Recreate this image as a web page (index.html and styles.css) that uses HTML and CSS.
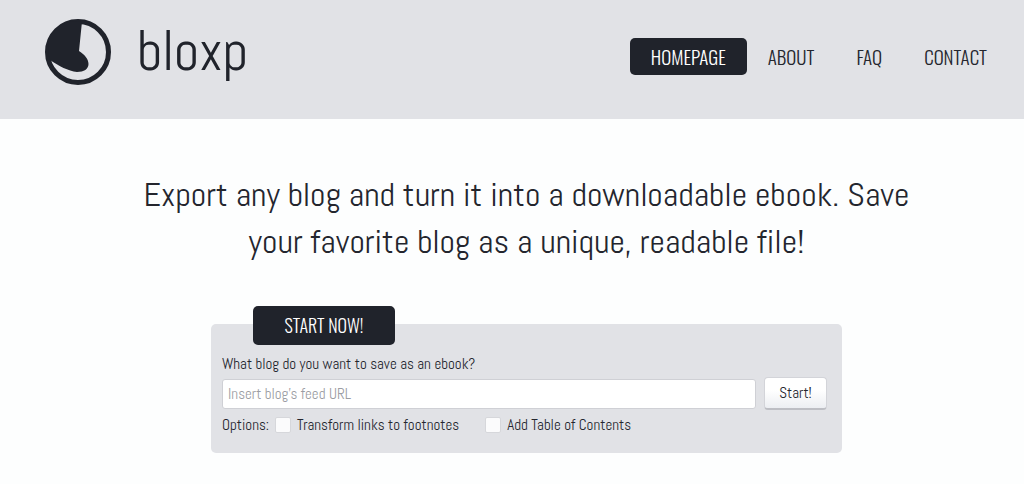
FILE: index.html
```html
<!DOCTYPE html>
<html lang="en">
<head>
<meta charset="utf-8">
<meta name="viewport" content="width=device-width, initial-scale=1">
<title>bloxp</title>
<link rel="stylesheet" href="styles.css">
</head>
<body>
<header class="site-header">
  <a class="brand" href="#">
    <svg class="brand-mark" viewBox="0 0 66 66" aria-hidden="true">
      <circle cx="33" cy="33" r="30.5" fill="none" stroke="#20232b" stroke-width="5"/>
      <path fill="#20232b" d="M37 2.5 L34 32 C40 36 43.500 40 43.500 45 C43.500 50 39 53 32 53 C23 52 14 47 5 41 C-2 20 10 0 37 2.5Z"/>
    </svg>
    <span class="brand-name">bloxp</span>
  </a>
  <nav class="site-nav">
    <a class="nav-link nav-link-active" href="#">HOMEPAGE</a>
    <a class="nav-link" href="#">ABOUT</a>
    <a class="nav-link" href="#">FAQ</a>
    <a class="nav-link" href="#">CONTACT</a>
  </nav>
</header>
<main class="content">
  <h1 class="headline">Export any blog and turn it into a downloadable ebook. Save your favorite blog as a unique, readable file!</h1>
  <form class="export-form">
    <h2 class="form-title">START NOW!</h2>
    <label class="feed-label" for="feed">What blog do you want to save as an ebook?</label>
    <div class="feed-row">
      <input class="feed-input" id="feed" type="text" placeholder="Insert blog’s feed URL">
      <button class="start-button" type="submit">Start!</button>
    </div>
    <div class="options">
      <span>Options:</span>
      <label class="option"><input class="check" type="checkbox"> Transform links to footnotes</label>
      <label class="option"><input class="check" type="checkbox"> Add Table of Contents</label>
    </div>
  </form>
</main>
</body>
</html>
```
FILE: styles.css
```css
* { box-sizing: border-box; }
body {
  margin: 0;
  background: #fdfefe;
  color: #24262e;
  font-family: Abel, "Roboto Condensed", "Liberation Sans Narrow", "Liberation Sans", sans-serif;
  font-size: 15px;
  line-height: 20px;
}
.site-header {
  display: flex;
  justify-content: space-between;
  align-items: flex-start;
  padding: 19px 16px 16px 45px;
  min-height: 119px;
  background: #e1e2e6;
}
.brand {
  display: flex;
  align-items: flex-start;
  gap: 26px;
  color: #20232b;
  text-decoration: none;
}
.brand-mark { width: 66px; height: 66px; }
.brand-name { font-size: 56px; line-height: 64px; }
.site-nav { display: flex; padding-top: 19px; }
.nav-link {
  padding: 0 21px;
  border-radius: 5px;
  color: #24262e;
  font-family: Oswald, Abel, "Roboto Condensed", "Liberation Sans Narrow", sans-serif;
  font-size: 19px;
  font-weight: 300;
  line-height: 37px;
  text-decoration: none;
}
.nav-link-active { background: #20232b; color: #fff; }
.content { padding: 52px 0 30px 29px; }
.headline {
  max-width: 800px;
  margin: 0 auto;
  font-size: 34px;
  font-weight: 400;
  line-height: 47px;
  text-align: center;
}
.export-form {
  max-width: 631px;
  margin: 59px auto 0;
  padding: 0 15px 18px 11px;
  border-radius: 5px;
  background: #e1e2e6;
}
.form-title {
  position: relative;
  top: -18px;
  width: 142px;
  margin: 0 0 -9px 31px;
  border-radius: 5px;
  background: #20232b;
  color: #fff;
  font-family: Oswald, Abel, "Roboto Condensed", "Liberation Sans Narrow", sans-serif;
  font-size: 18px;
  font-weight: 300;
  line-height: 39px;
  text-align: center;
}
.feed-label { display: block; }
.feed-row { display: flex; align-items: center; gap: 8px; margin-top: 3px; }
.feed-input {
  flex: 1;
  min-width: 0;
  height: 30px;
  padding: 0 5px;
  border: 1px solid #cfd0d5;
  border-radius: 3px;
  background: #fff;
  color: #24262e;
  font: inherit;
}
.feed-input::placeholder { color: #9b9da3; opacity: 1; }
.start-button {
  width: 63px;
  height: 33px;
  padding: 0;
  border: 1px solid #d3d4d9;
  border-bottom: 2px solid #bdbec4;
  border-radius: 4px;
  background: linear-gradient(#fff 40%, #eceef2);
  color: #24262e;
  font: inherit;
}
.options { display: flex; gap: 6px; margin-top: 5px; }
.option { display: flex; align-items: center; gap: 6px; }
.option + .option { margin-left: 20px; }
.check {
  appearance: none;
  width: 16px;
  height: 16px;
  margin: 0;
  border: 1px solid #d6d7db;
  border-radius: 2px;
  background: #fbfbfc;
}
.check:checked { background: #20232b; }
```
